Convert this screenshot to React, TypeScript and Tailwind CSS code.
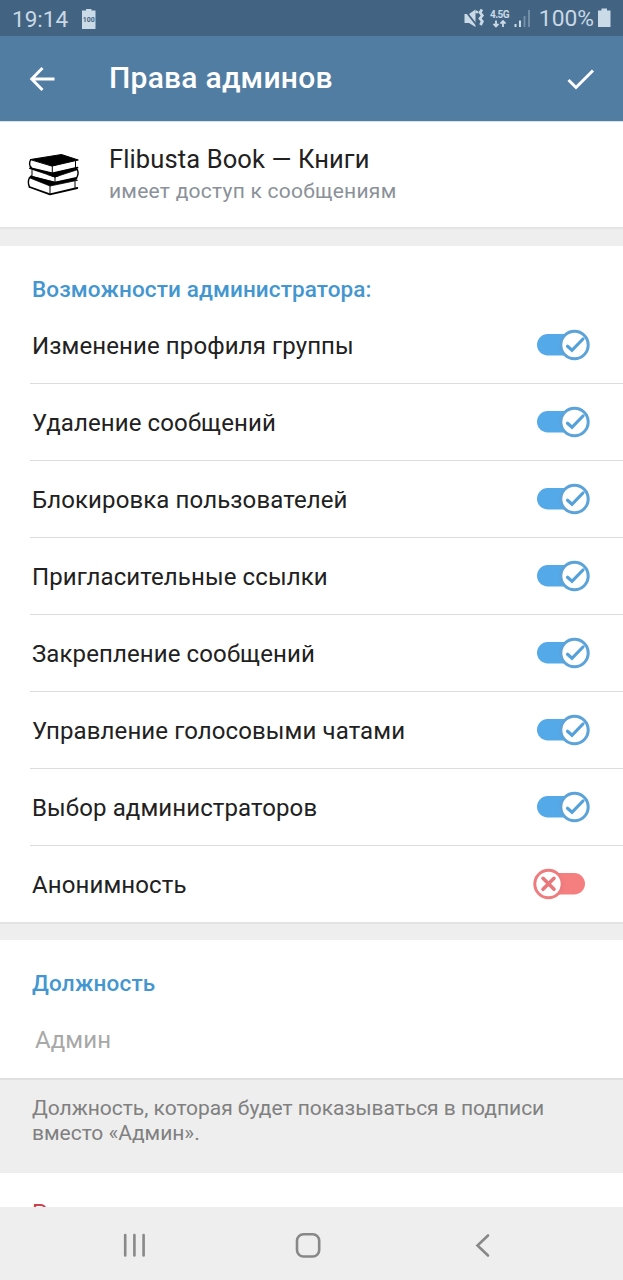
import React from "react";

const permisos = [
  { id: 1, nombre: "Изменение профиля группы", activo: true },
  { id: 2, nombre: "Удаление сообщений", activo: true },
  { id: 3, nombre: "Блокировка пользователей", activo: true },
  { id: 4, nombre: "Пригласительные ссылки", activo: true },
  { id: 5, nombre: "Закрепление сообщений", activo: true },
  { id: 6, nombre: "Управление голосовыми чатами", activo: true },
  { id: 7, nombre: "Выбор администраторов", activo: true },
  { id: 8, nombre: "Анонимность", activo: false },
];

function Interruptor({ activo }: { activo: boolean }): JSX.Element {
  return activo ? (
    <svg width="60" height="34" viewBox="0 0 60 34" fill="none">
      <rect x="4" y="6" width="44" height="21.5" rx="10.75" fill="#54a9e8" />
      <circle cx="41.5" cy="17" r="13.7" fill="#fff" stroke="#5ba3d8" strokeWidth="3" />
      <path d="M34.5 18.3L39 22.3L50 11" stroke="#54a1da" strokeWidth="3.2" strokeLinecap="round" />
    </svg>
  ) : (
    <svg width="60" height="34" viewBox="0 0 60 34" fill="none">
      <rect x="10" y="6" width="42" height="21.5" rx="10.75" fill="#f57e7e" />
      <circle cx="15.5" cy="17" r="13.7" fill="#fff" stroke="#ee7c7f" strokeWidth="3" />
      <path d="M10 11.3L21 22.3M21 11.3L10 22.3" stroke="#e8777b" strokeWidth="3.6" strokeLinecap="round" />
    </svg>
  );
}

function Libros(): JSX.Element {
  return (
    <svg width="54" height="44" viewBox="0 0 54 44" fill="none" stroke="#000" strokeLinejoin="round" strokeLinecap="round">
      {/* libro de abajo */}
      <path d="M2.5 26L23 33.5L49 28.5V34.5L23 41L3 34Z" fill="#fff" stroke="none" />
      <path d="M2.3 24.7L23 33L50.5 27.3L44 24L6 22Z" fill="#000" strokeWidth="0.8" />
      <path d="M2.3 25C1 28 1 31 2.5 34" strokeWidth="1.4" />
      <path d="M2.5 34L23 41.3L50.3 35" strokeWidth="1.8" />
      <path d="M23 33V41M48 28.5V34.5" strokeWidth="1" />
      {/* libro del medio */}
      <path d="M4.5 17L28 24.5L50 17V24.5L28 29L5 23Z" fill="#fff" stroke="none" />
      <path d="M2.5 15.5L28 24L51 16.5L44 12L6 13Z" fill="#000" strokeWidth="0.8" />
      <path d="M5 17.5V22.5M28 24V29.5" strokeWidth="1" />
      <path d="M50.5 17C51.5 19.5 51 22.5 49.5 25" strokeWidth="1.4" />
      <path d="M4 23.5L28 29.7L49.5 25" strokeWidth="1.8" />
      {/* libro de arriba */}
      <path d="M4 8L25.3 13L49 8V14.5L25.3 20L4.5 15Z" fill="#fff" stroke="none" />
      <path d="M3.5 6.5L34.5 1.5L51.3 7L25.3 13Z" fill="#000" strokeWidth="1" />
      <path d="M3.5 7C2.2 9.5 2.5 13 4.5 15.3" strokeWidth="1.4" />
      <path d="M4.5 15.3L25.3 20.3L50.5 14.7" strokeWidth="1.8" />
      <path d="M25.3 13V20M48.5 8.5V14.5" strokeWidth="1" />
    </svg>
  );
}

export default function App(): JSX.Element {
  return (
    <div className="w-[623px] h-[1280px] overflow-hidden flex flex-col bg-[#eeeeee] font-['Roboto','Liberation_Sans',sans-serif]">
      <header className="h-[122px] shrink-0 bg-[#527da3] text-white border-b border-[#d6e3ef]">
        <div className="h-9 bg-[#426482] flex items-center justify-between pl-3 pr-3 text-[#c9d8e5]">
          <div className="flex items-center">
            <span className="text-[22.5px] leading-9 pt-px">19:14</span>
            <svg className="ml-3.5" width="14" height="22" viewBox="0 0 14 22">
              <path d="M0 3.5H4V2H9.5V3.5H13.5V22H0Z" fill="#cbdae7" />
              <text x="6.8" y="15" fontSize="7" fontWeight="700" fill="#426482" textAnchor="middle" fontFamily="Roboto">
                100
              </text>
            </svg>
          </div>
          <div className="flex items-center">
            <svg width="68" height="24" viewBox="0 0 68 24" fill="none">
              <path d="M0.5 8H5L11.5 3.5V21L5 17H0.5Z" fill="#cbdae7" />
              <path d="M0 3L12.5 19" stroke="#426482" strokeWidth="1.8" />
              <path d="M13.5 5L12 7M18 3.5L16 6.5L18.3 9.5L16 12.5L18.3 15.5L16.5 19" stroke="#cbdae7" strokeWidth="2.8" />
              <text x="26" y="12" fontSize="10" fontWeight="700" fill="#cbdae7" fontFamily="Roboto" textLength="19.5">
                4.5G
              </text>
              <path d="M32 14.5V20.5M29.5 17.8L32 20.5L34.5 17.8M39 21V15M36.5 17.7L39 15L41.5 17.7" stroke="#cbdae7" strokeWidth="1.8" />
              <path d="M51.5 18V21M56 14.5V21" stroke="#cbdae7" strokeWidth="2" />
              <path d="M60.5 10V21M65 4V21" stroke="#7892aa" strokeWidth="1.8" />
            </svg>
            <span className="ml-[7px] text-[22.8px] leading-9 pt-[2px]">100%</span>
            <svg className="ml-1" width="13" height="20" viewBox="0 0 13 20">
              <path d="M0 2.5H3.5V0.5H9V2.5H12.5V19H0Z" fill="#cbdae7" />
            </svg>
          </div>
        </div>
        <div className="h-[85px] flex items-center pl-[28px] pr-7">
          <svg width="28" height="28" viewBox="0 0 28 28" fill="none" stroke="#fff" strokeWidth="2.9">
            <path d="M26.5 14H4M14.5 3L3.7 14L14.5 25" />
          </svg>
          <h1 className="ml-[53px] flex-1 pb-[2px] text-[30px] font-medium tracking-[0.25px]">Права админов</h1>
          <svg width="28" height="24" viewBox="0 0 28 24" fill="none" stroke="#fff" strokeWidth="3">
            <path d="M1.5 13L9 20.5L26 3.5" />
          </svg>
        </div>
      </header>

      <section className="h-[105px] shrink-0 bg-white flex items-start pl-[27px] pt-[23px]">
        <div className="pt-2">
          <Libros />
        </div>
        <div className="ml-7">
          <p className="text-[25.5px] leading-7 tracking-[0.12px] text-[#212121]">Flibusta Book — Книги</p>
          <p className="mt-1.5 text-[21px] leading-6 tracking-[0.25px] text-[#8a9199]">имеет доступ к сообщениям</p>
        </div>
      </section>
      <div className="h-[19px] shrink-0 bg-[#eeeeee] border-t-2 border-[#e4e4e4]" />

      <section className="h-[676px] shrink-0 bg-white">
        <h2 className="h-[61px] pt-[29px] pl-8 text-[22.5px] leading-7 font-medium tracking-[0.12px] text-[#4396cf]">
          Возможности администратора:
        </h2>
        {permisos.map((permiso) => (
          <div
            key={permiso.id}
            className="ml-[30px] h-[77px] pl-0.5 pr-[30px] flex items-center justify-between border-b border-[#dcdcdc] last:border-transparent"
          >
            <span className="pt-px text-[24px] tracking-[0.11px] text-[#212121]">{permiso.nombre}</span>
            <Interruptor activo={permiso.activo} />
          </div>
        ))}
      </section>
      <div className="h-[18px] shrink-0 bg-[#eeeeee] border-t-2 border-[#e2e2e2]" />

      <section className="h-[138px] shrink-0 bg-white">
        <h2 className="pt-[29px] pl-8 text-[22.5px] leading-7 font-medium tracking-[0.2px] text-[#4396cf]">Должность</h2>
        <p className="mt-[29px] pl-[35px] text-[24px] leading-7 tracking-[0.1px] text-[#a8a8a8]">Админ</p>
      </section>
      <div className="h-[95px] shrink-0 bg-[#eeeeee] border-t-2 border-[#e0e0e0] pl-8 pt-4 text-[21px] leading-[25px] tracking-[-0.02px] text-[#808080]">
        <p>Должность, которая будет показываться в подписи</p>
        <p>вместо «Админ».</p>
      </div>
      <section className="h-[34px] shrink-0 overflow-hidden bg-white pl-8 pt-[26px]">
        <p className="text-[24px] leading-7 text-[#c9424b]">Р</p>
      </section>

      <nav className="h-[73px] shrink-0 bg-[#eeeeee] flex items-center pt-1 pl-[122px]">
        <svg width="26" height="26" viewBox="0 0 26 26" stroke="#888" strokeWidth="2.6" strokeLinecap="round">
          <path d="M3.2 2V22.5M12.4 2V22.5M21.6 2V22.5" />
        </svg>
        <svg className="ml-[147px]" width="26" height="26" viewBox="0 0 26 26" fill="none" stroke="#888" strokeWidth="2.6">
          <rect x="2" y="1.3" width="22.2" height="22.2" rx="6.5" />
        </svg>
        <svg className="ml-[154px]" width="16" height="26" viewBox="0 0 16 26" fill="none" stroke="#888" strokeWidth="2.6" strokeLinecap="round">
          <path d="M13 2.5L2.5 12.5L13 22.5" />
        </svg>
      </nav>
    </div>
  );
}
